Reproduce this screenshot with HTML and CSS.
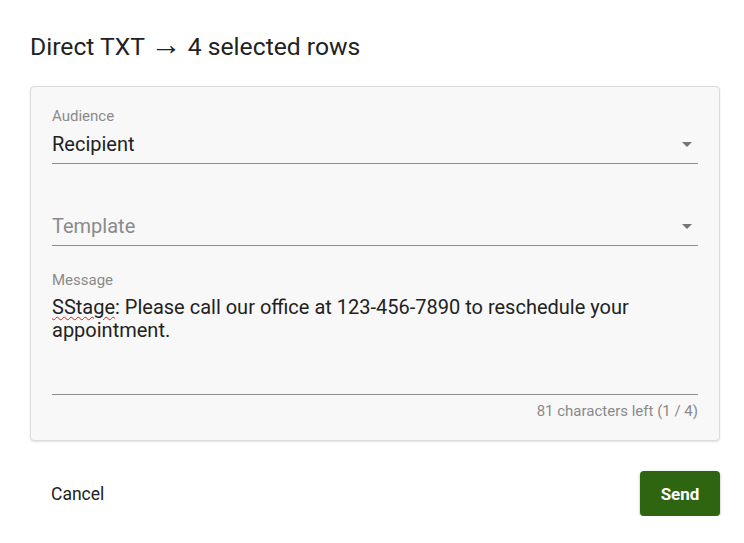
FILE: index.html
```html
<!DOCTYPE html>
<html>
<head>
<meta charset="utf-8">
<link rel="stylesheet" href="styles.css">
</head>
<body>
<div class="dialog">
  <h2 class="title">Direct TXT <span class="arrow-glyph">→</span> 4 selected rows</h2>
  <div class="card">
    <div class="field">
      <div class="label">Audience</div>
      <div class="input select">
        <span class="value">Recipient</span>
        <svg class="arrow" viewBox="0 0 24 24" width="24" height="24"><path d="M7 10l5 5 5-5z"/></svg>
      </div>
    </div>
    <div class="field">
      <div class="label"></div>
      <div class="input select">
        <span class="placeholder">Template</span>
        <svg class="arrow" viewBox="0 0 24 24" width="24" height="24"><path d="M7 10l5 5 5-5z"/></svg>
      </div>
    </div>
    <div class="field">
      <div class="label">Message</div>
      <div class="input textarea"><span class="misspelled">SStage</span>: Please call our office at 123-456-7890 to reschedule your appointment.</div>
      <div class="helper">81 characters left (1 / 4)</div>
    </div>
  </div>
  <div class="actions">
    <button class="btn cancel">Cancel</button>
    <button class="btn send">Send</button>
  </div>
</div>
</body>
</html>
```
FILE: styles.css
```css
* { box-sizing: border-box; }
html, body { margin: 0; padding: 0; background: #fff; }
body { font-family: Roboto, "Liberation Sans", sans-serif; color: #222; }
.dialog { padding: 33px 24px 0 30px; }
.title {
  margin: 0 0 25px 0;
  font-size: 24.7px;
  line-height: 28px;
  font-weight: 400;
  color: #222;
}
.arrow-glyph {
  font-family: "Liberation Sans", sans-serif;
  font-size: 31px;
  line-height: 0;
}
.card {
  background: #f8f8f8;
  border: 1px solid #dcdcdc;
  border-radius: 4px;
  box-shadow: 0 1px 2px rgba(0,0,0,0.12);
  padding: 21px 21px 21px 21px;
  display: flex;
  flex-direction: column;
  gap: 26px;
}
.label {
  font-size: 15px;
  line-height: 16px;
  height: 16px;
  color: #8a8a8a;
}
.input {
  position: relative;
  border-bottom: 1px solid #8e8e8e;
  padding: 9px 0 8px 0;
  font-size: 20px;
  line-height: 22px;
  color: #222;
}
.select { height: 40px; }
.placeholder { color: #8a8a8a; }
.arrow {
  position: absolute;
  right: -1px;
  top: 8px;
  fill: #757575;
}
.textarea {
  height: 107px;
  padding-top: 8px;
  line-height: 23px;
}
.misspelled {
  text-decoration: underline wavy #e0201c;
  text-decoration-thickness: 1px;
  text-underline-offset: 2px;
}
.helper {
  margin-top: 8px;
  text-align: right;
  font-size: 15px;
  line-height: 16px;
  color: #8a8a8a;
}
.actions {
  display: flex;
  justify-content: space-between;
  align-items: center;
  margin-top: 30px;
}
.btn {
  font-family: Roboto, "Liberation Sans", sans-serif;
  font-size: 17px;
  border: none;
  cursor: pointer;
}
.cancel {
  background: transparent;
  color: #222;
  font-size: 17.5px;
  font-weight: 400;
  padding: 8px 21px;
  line-height: 20px;
}
.send {
  background: #2e6511;
  color: #fff;
  font-weight: 700;
  width: 80px;
  height: 45px;
  border-radius: 4px;
  box-shadow: 0 1px 3px rgba(0,0,0,0.3);
}
```
